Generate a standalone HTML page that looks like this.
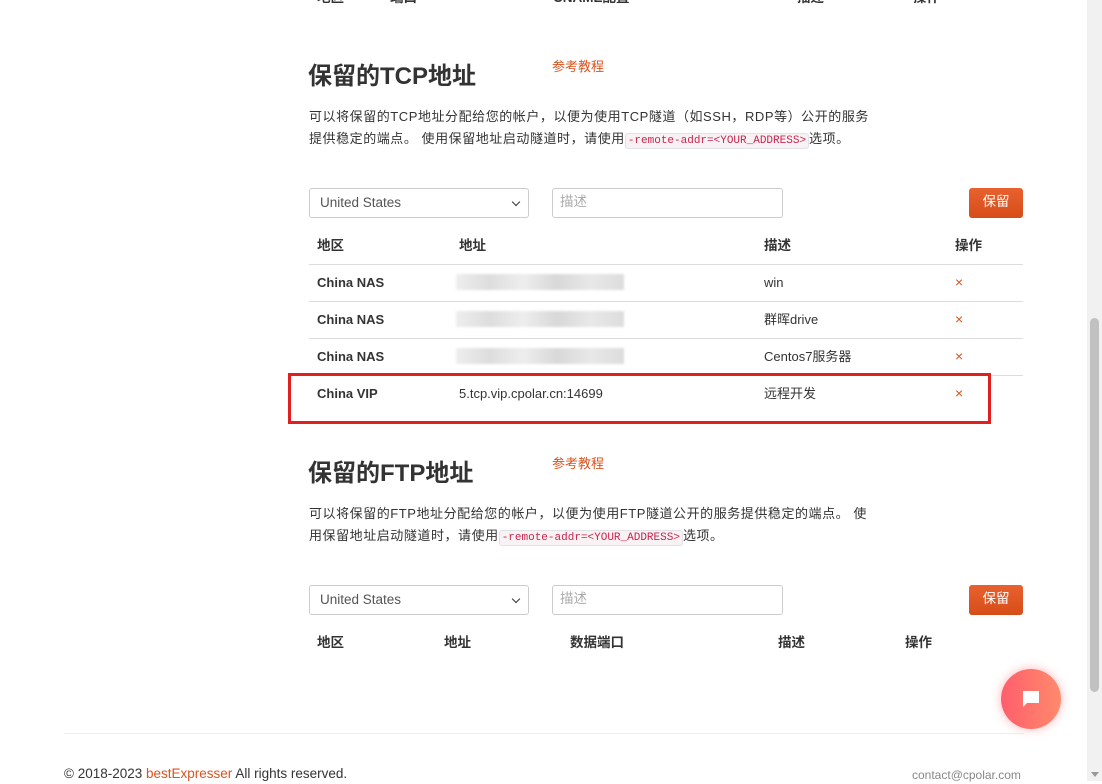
<!DOCTYPE html>
<html><head><meta charset="utf-8"><style>
*{box-sizing:border-box;margin:0;padding:0}
body{width:1102px;height:781px;overflow:hidden;background:#fff;font-family:"Liberation Sans","Noto Sans CJK SC",sans-serif;color:#333;font-size:13px;position:relative}
.a{position:absolute;white-space:nowrap;line-height:18px}
h2{position:absolute;font-size:24px;font-weight:bold;color:#333;white-space:nowrap;line-height:30px}
.link{color:#d9531e;font-size:13px}
p.d{position:absolute;left:309px;width:600px;font-size:13px;line-height:22px;color:#333;white-space:nowrap;letter-spacing:0.55px}
code{font-family:"Liberation Mono",monospace;font-size:11px;letter-spacing:0;color:#c7254e;background:#f9f2f4;border:1px solid #e1e1e8;border-radius:3px;padding:1px 2px}
.sel{position:absolute;width:220px;height:30px;border:1px solid #ccc;border-radius:3px;padding:0 10px;line-height:28px;font-size:13.5px;color:#555}
.sel:after{content:"";position:absolute;right:9px;top:10px;width:5px;height:5px;border-right:1.5px solid #333;border-bottom:1.5px solid #333;transform:rotate(45deg)}
.inp{position:absolute;width:231px;height:30px;border:1px solid #ccc;border-radius:3px;padding:0 7px;line-height:26px;font-size:13.5px;color:#aaa}
.btn{position:absolute;width:54px;height:30px;background:linear-gradient(#e8612f,#d64d18);border-radius:3px;color:#fff;font-size:13.5px;text-align:center;line-height:28px}
.th{position:absolute;font-weight:bold;font-size:13.5px}
.hr{position:absolute;left:309px;width:714px;height:1px;background:#ddd}
.b{font-weight:bold}
.x{color:#d9531e;font-size:14px}
.blur{position:absolute;width:168px;height:16px;background:linear-gradient(90deg,#eee,#ddd 20%,#eee 40%,#d8d8d8 60%,#e8e8e8 80%,#ddd);filter:blur(1px)}
</style></head><body>
<div class="th a" style="left:317px;top:-11px">地区</div>
<div class="th a" style="left:390px;top:-11px">端口</div>
<div class="th a" style="left:553px;top:-11px">CNAME配置</div>
<div class="th a" style="left:797px;top:-11px">描述</div>
<div class="th a" style="left:913px;top:-11px">操作</div>

<h2 style="left:308px;top:62px">保留的TCP地址</h2>
<div class="a link" style="left:552px;top:58px">参考教程</div>
<p class="d" style="top:106px">可以将保留的TCP地址分配给您的帐户，以便为使用TCP隧道（如SSH，RDP等）公开的服务<br>提供稳定的端点。 使用保留地址启动隧道时，请使用<code>-remote-addr=&lt;YOUR_ADDRESS&gt;</code>选项。</p>
<div class="sel" style="left:309px;top:188px">United States</div>
<div class="inp" style="left:552px;top:188px">描述</div>
<div class="btn" style="left:969px;top:188px">保留</div>
<div class="th a" style="left:317px;top:237px">地区</div>
<div class="th a" style="left:459px;top:237px">地址</div>
<div class="th a" style="left:764px;top:237px">描述</div>
<div class="th a" style="left:955px;top:237px">操作</div>
<div class="hr" style="top:264px"></div>
<div class="a b" style="left:317px;top:274px">China NAS</div><div class="blur" style="left:456px;top:274px"></div><div class="a" style="left:764px;top:274px">win</div><div class="a x" style="left:955px;top:273px">×</div>
<div class="hr" style="top:301px"></div>
<div class="a b" style="left:317px;top:311px">China NAS</div><div class="blur" style="left:456px;top:311px"></div><div class="a" style="left:764px;top:311px">群晖drive</div><div class="a x" style="left:955px;top:310px">×</div>
<div class="hr" style="top:338px"></div>
<div class="a b" style="left:317px;top:348px">China NAS</div><div class="blur" style="left:456px;top:348px"></div><div class="a" style="left:764px;top:348px">Centos7服务器</div><div class="a x" style="left:955px;top:347px">×</div>
<div class="hr" style="top:375px"></div>
<div class="a b" style="left:317px;top:385px">China VIP</div><div class="a" style="left:459px;top:385px">5.tcp.vip.cpolar.cn:14699</div><div class="a" style="left:764px;top:385px">远程开发</div><div class="a x" style="left:955px;top:384px">×</div>
<div class="a" style="left:288px;top:373px;width:703px;height:51px;border:3px solid #e0201e"></div>

<h2 style="left:308px;top:459px">保留的FTP地址</h2>
<div class="a link" style="left:552px;top:455px">参考教程</div>
<p class="d" style="top:503px">可以将保留的FTP地址分配给您的帐户，以便为使用FTP隧道公开的服务提供稳定的端点。 使<br>用保留地址启动隧道时，请使用<code>-remote-addr=&lt;YOUR_ADDRESS&gt;</code>选项。</p>
<div class="sel" style="left:309px;top:585px">United States</div>
<div class="inp" style="left:552px;top:585px">描述</div>
<div class="btn" style="left:969px;top:585px">保留</div>
<div class="th a" style="left:317px;top:634px">地区</div>
<div class="th a" style="left:444px;top:634px">地址</div>
<div class="th a" style="left:570px;top:634px">数据端口</div>
<div class="th a" style="left:778px;top:634px">描述</div>
<div class="th a" style="left:905px;top:634px">操作</div>

<div class="a" style="left:64px;top:733px;width:960px;height:1px;background:#eee"></div>
<div class="a" style="left:64px;top:765px;font-size:13.5px">© 2018-2023 <span style="color:#d9531e">bestExpresser</span> All rights reserved.</div>
<div class="a" style="left:912px;top:766px;font-size:12px;color:#888">contact@cpolar.com</div>

<div class="a" style="left:1001px;top:669px;width:60px;height:60px;border-radius:50%;background:linear-gradient(90deg,#ff5e6c,#ff8a6c);box-shadow:0 0 10px rgba(255,90,100,.45)"></div>
<svg class="a" style="left:1020px;top:688px" width="22" height="22" viewBox="0 0 22 22"><path d="M3 3h16v12H7l-4 4z" fill="#fff"/></svg>

<div class="a" style="left:1087px;top:0;width:15px;height:781px;background:#f1f1f1"></div>
<div class="a" style="left:1090px;top:318px;width:9px;height:374px;background:#c1c1c1;border-radius:5px"></div>
<div class="a" style="left:1091px;top:772px;width:0;height:0;border-left:4px solid transparent;border-right:4px solid transparent;border-top:5px solid #999"></div>
</body></html>
